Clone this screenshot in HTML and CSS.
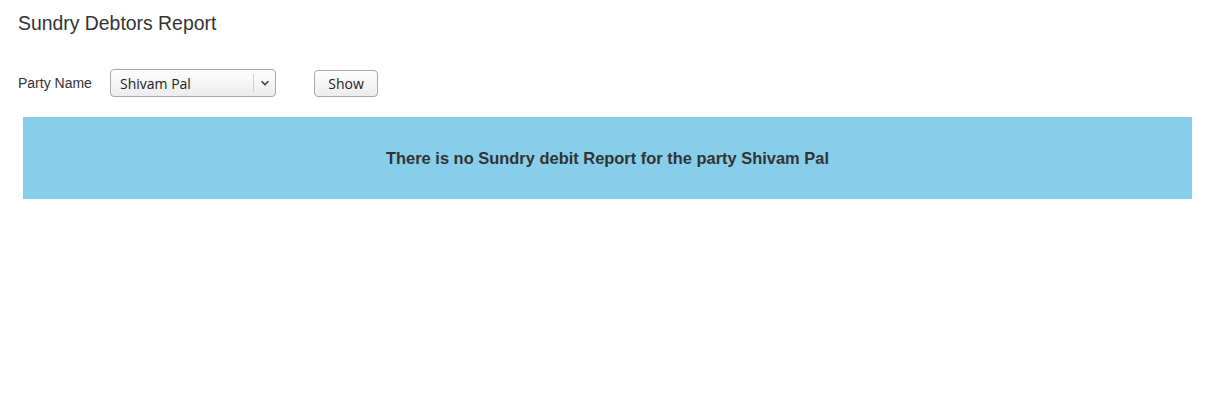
FILE: index.html
```html
<!DOCTYPE html>
<html>
<head>
<meta charset="utf-8">
<link rel="stylesheet" href="styles.css">
</head>
<body>
<div class="page">
  <h1 class="title">Sundry Debtors Report</h1>
  <div class="filter">
    <span class="label">Party Name</span>
    <div class="select">
      <span class="select-value">Shivam Pal</span>
      <span class="select-arrow">
        <svg width="10" height="6" viewBox="0 0 10 6"><path d="M1.5 1.2 L5 4.6 L8.5 1.2" fill="none" stroke="#444" stroke-width="1.6"/></svg>
      </span>
    </div>
    <button class="btn">Show</button>
  </div>
  <div class="notice">There is no Sundry debit Report for the party Shivam Pal</div>
</div>
</body>
</html>
```

FILE: styles.css
```css
html, body {
  margin: 0;
  padding: 0;
  background: #fff;
}
.page {
  padding: 12px 22px 0 18px;
  font-family: "Liberation Sans", Arial, sans-serif;
  color: #333;
}
.title {
  margin: 0;
  font-size: 19.4px;
  font-weight: normal;
  line-height: 22px;
  color: #333;
}
.filter {
  display: flex;
  align-items: center;
  margin-top: 35px;
  height: 28px;
}
.label {
  font-size: 14px;
  color: #333;
  width: 92px;
}
.select {
  box-sizing: border-box;
  width: 166px;
  height: 28px;
  border: 1px solid #a8a8a8;
  border-radius: 4px;
  background: linear-gradient(#fefefe, #ececec);
  display: flex;
  align-items: center;
  font-family: "Open Sans", "DejaVu Sans", sans-serif;
  font-size: 14px;
  color: #222;
}
.select-value {
  flex: 1;
  padding-left: 9px;
}
.select-arrow {
  width: 21px;
  height: 18px;
  border-left: 1px solid #d0d0d0;
  display: flex;
  align-items: center;
  justify-content: center;
}
.btn {
  box-sizing: border-box;
  margin-left: 38px;
  width: 64px;
  height: 27px;
  border: 1px solid #a8a8a8;
  border-radius: 4px;
  background: linear-gradient(#fefefe, #ececec);
  font-family: "Open Sans", "DejaVu Sans", sans-serif;
  font-size: 14px;
  color: #222;
  padding: 0;
}
.notice {
  margin: 20px 0 0 5px;
  height: 82px;
  background: #87ceeb;
  display: flex;
  align-items: center;
  justify-content: center;
  font-size: 16.45px;
  font-weight: bold;
  color: #333;
}
```
